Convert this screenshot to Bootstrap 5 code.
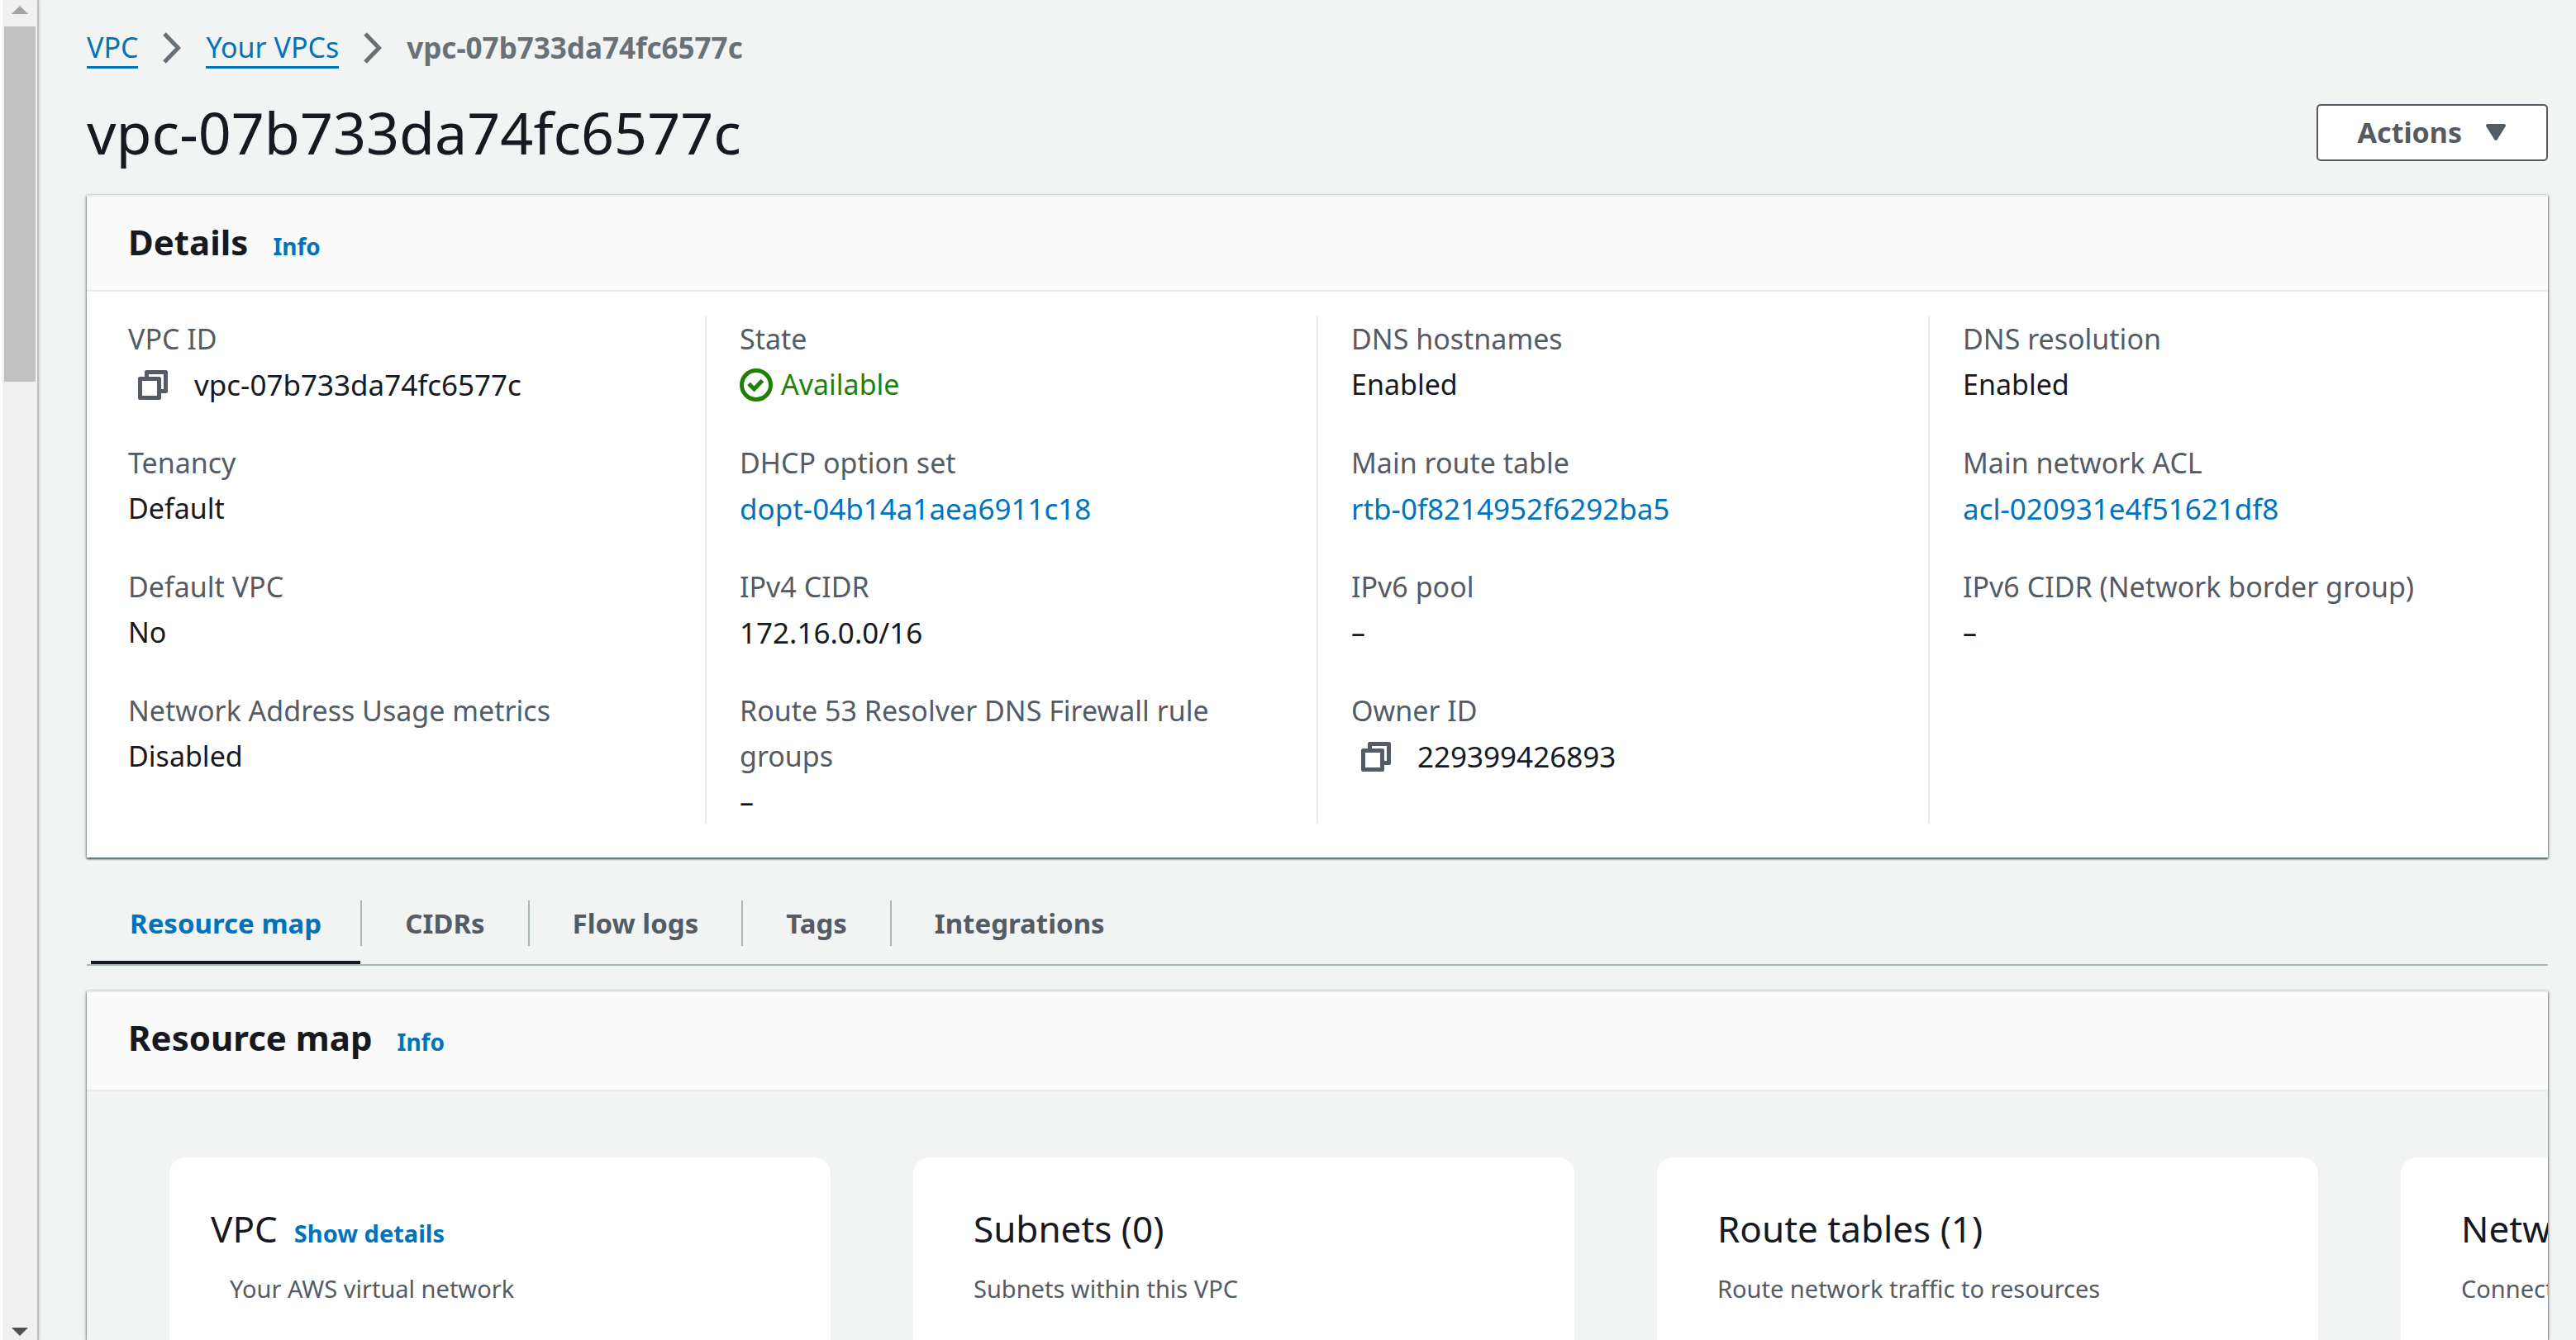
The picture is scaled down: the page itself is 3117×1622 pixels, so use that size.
<!DOCTYPE html>
<html lang="en">
<head>
<meta charset="utf-8">
<meta name="viewport" content="width=device-width, initial-scale=1">
<title>vpc-07b733da74fc6577c | VPC Console</title>
<link href="https://cdn.jsdelivr.net/npm/bootstrap@5.3.0/dist/css/bootstrap.min.css" rel="stylesheet">
<style>
  :root { --ink:#16191f; --slate:#545b64; --azure:#0073bb; --canvas:#f2f3f3; --rule:#eaeded; --line:#aab7b8; }
  body { font-family:"Noto Sans","Open Sans",sans-serif; font-size:34px; line-height:55px; color:var(--ink); background:var(--canvas); }
  a { color:var(--azure); text-decoration:none; }
  .rail { width:45px; background:#f0f0f0; border-left:3px solid #fff; flex:none; box-shadow:1px 0 0 1px #b9c0c1, 3px 0 3px rgba(0,28,36,.15); }
  .rail-thumb { width:38px; height:430px; background:#c1c1c1; }
  .page-main { min-width:0; padding:30px 34px 0 60px; }
  .breadcrumb { --bs-breadcrumb-margin-bottom:0; }
  .breadcrumb a { border-bottom:3px solid var(--azure); line-height:46px; display:inline-block; }
  .crumb-here { color:#687078; font-weight:700; }
  .crumb-here, .id-text { font-size:35px; }
  .title-row { margin:30px 0 31px; }
  .page-title { font-size:70px; line-height:90px; font-weight:400; }
  .btn-actions { --bs-btn-color:var(--slate); --bs-btn-bg:#fff; --bs-btn-border-color:var(--slate); --bs-btn-border-width:2px; --bs-btn-border-radius:5px; --bs-btn-font-size:34px; --bs-btn-font-weight:700; --bs-btn-line-height:55px; --bs-btn-padding-y:5px; --bs-btn-padding-x:48px; gap:28px; }
  .panel { box-shadow:0 2px 2px 0 rgba(0,28,36,.5), 1px 1px 3px 0 rgba(0,28,36,.35), -1px 1px 3px 0 rgba(0,28,36,.3); border-top:2px solid var(--rule); background:#fff; }
  .panel-head { background:#fafafa; border-bottom:2px solid var(--rule); padding:27px 50px 31px; gap:30px; }
  .panel-head.tall { padding-bottom:36px; }
  .panel-head h2 { font-size:42px; font-weight:700; line-height:55px; margin:0; }
  .info-link { font-size:28px; font-weight:700; line-height:28px; }
  .map-head .info-link { font-size:29px; }
  .facts { padding:30px 10px 40px; }
  .fact-col { flex:1 1 0; padding:0 40px; display:flex; flex-direction:column; gap:40px; }
  .fact-col + .fact-col { border-left:2px solid var(--rule); }
  .fact-col dt { font-weight:400; color:var(--slate); }
  .fact-col dd { margin:0; }
  .copy-btn { border:0; background:none; padding:0 32px 0 12px; color:var(--slate); line-height:0; }
  .ok-text { color:#1d8102; gap:10px; }
  .nav-tabs { --bs-nav-tabs-border-width:0; border-bottom:2px solid var(--line); padding-left:5px; margin:52px 0 30px; }
  .nav-tabs .nav-item { padding-bottom:22px; }
  .nav-tabs .nav-link { color:var(--slate); font-size:33px; font-weight:700; padding:0 52px; border:0; border-radius:0; line-height:55px; }
  .nav-tabs .nav-item + .nav-item .nav-link { border-left:2px solid var(--line); }
  .nav-tabs .nav-item.current { border-bottom:4px solid var(--ink); padding-bottom:18px; }
  .nav-tabs .nav-item.current .nav-link { color:var(--azure); padding:0 47px; }
  .map-area { background:var(--canvas); padding:80px 0 0 100px; gap:100px; overflow:hidden; }
  .map-card { flex:0 0 800px; border-radius:20px 20px 0 0; background:#fff; padding:59px 50px 0 73px; }
  .map-head { gap:20px; }
  .map-head.outdent { margin-left:-23px; }
  .map-head h3 { font-size:44px; font-weight:400; line-height:55px; margin:0; }
  .map-note { font-size:29px; line-height:40px; color:var(--slate); margin:25px 0 0; }
</style>
</head>
<body>
<div class="d-flex vh-100 overflow-hidden">
  <div class="rail d-flex flex-column align-items-center" aria-hidden="true">
    <svg width="20" height="32" viewBox="0 0 20 32"><path d="M0 17 10 7 20 17z" fill="#a3a3a3"/></svg>
    <div class="rail-thumb"></div>
    <svg class="mt-auto" width="20" height="22" viewBox="0 0 20 22"><path d="M0 7h20L10 17z" fill="#505050"/></svg>
  </div>
  <main class="page-main flex-grow-1 d-flex flex-column">
    <nav aria-label="breadcrumb">
      <ol class="breadcrumb align-items-center">
        <li><a href="#">VPC</a></li>
        <li class="d-flex"><svg width="82" height="40" viewBox="-1 0 82 40"><path d="M31 3 47.500 20 31 37" fill="none" stroke="#687078" stroke-width="5"/></svg></li>
        <li><a href="#">Your VPCs</a></li>
        <li class="d-flex"><svg width="82" height="40" viewBox="-1 0 82 40"><path d="M31 3 47.500 20 31 37" fill="none" stroke="#687078" stroke-width="5"/></svg></li>
        <li class="crumb-here" aria-current="page">vpc-07b733da74fc6577c</li>
      </ol>
    </nav>
    <div class="title-row d-flex justify-content-between align-items-center">
      <h1 class="page-title mb-0">vpc-07b733da74fc6577c</h1>
      <button class="btn btn-actions d-flex align-items-center" type="button">Actions <svg width="26" height="22" viewBox="0 0 26 22"><path d="M3 3h20L13 19z" fill="currentColor" stroke="currentColor" stroke-width="4" stroke-linejoin="round"/></svg></button>
    </div>
    <section class="panel">
      <header class="panel-head d-flex align-items-baseline"><h2>Details</h2><a class="info-link" href="#">Info</a></header>
      <div class="facts d-flex">
        <dl class="fact-col mb-0">
          <div><dt>VPC ID</dt><dd class="d-flex align-items-center"><button class="copy-btn" type="button" aria-label="Copy VPC ID"><svg width="36" height="36" viewBox="0 0 36 36" fill="none" stroke="currentColor" stroke-width="5" stroke-linejoin="round"><path d="M2.500 10.500h23v23h-23zM10.500 10V2.500h23v23H26"/></svg></button><span class="id-text">vpc-07b733da74fc6577c</span></dd></div>
          <div><dt>Tenancy</dt><dd>Default</dd></div>
          <div><dt>Default VPC</dt><dd>No</dd></div>
          <div><dt>Network Address Usage metrics</dt><dd>Disabled</dd></div>
        </dl>
        <dl class="fact-col mb-0">
          <div><dt>State</dt><dd class="ok-text d-flex align-items-center"><svg width="40" height="40" viewBox="0 0 40 40" fill="none" stroke="currentColor" stroke-width="5"><circle cx="20" cy="20" r="17.500"/><path d="M11 18.500l6.500 6.500 10-10.500"/></svg>Available</dd></div>
          <div><dt>DHCP option set</dt><dd class="id-text"><a href="#">dopt-04b14a1aea6911c18</a></dd></div>
          <div><dt>IPv4 CIDR</dt><dd class="id-text">172.16.0.0/16</dd></div>
          <div><dt>Route 53 Resolver DNS Firewall rule groups</dt><dd>–</dd></div>
        </dl>
        <dl class="fact-col mb-0">
          <div><dt>DNS hostnames</dt><dd>Enabled</dd></div>
          <div><dt>Main route table</dt><dd class="id-text"><a href="#">rtb-0f8214952f6292ba5</a></dd></div>
          <div><dt>IPv6 pool</dt><dd>–</dd></div>
          <div><dt>Owner ID</dt><dd class="d-flex align-items-center"><button class="copy-btn" type="button" aria-label="Copy owner ID"><svg width="36" height="36" viewBox="0 0 36 36" fill="none" stroke="currentColor" stroke-width="5" stroke-linejoin="round"><path d="M2.500 10.500h23v23h-23zM10.500 10V2.500h23v23H26"/></svg></button><span class="id-text">229399426893</span></dd></div>
        </dl>
        <dl class="fact-col mb-0">
          <div><dt>DNS resolution</dt><dd>Enabled</dd></div>
          <div><dt>Main network ACL</dt><dd class="id-text"><a href="#">acl-020931e4f51621df8</a></dd></div>
          <div><dt>IPv6 CIDR (Network border group)</dt><dd>–</dd></div>
        </dl>
      </div>
    </section>
    <ul class="nav nav-tabs">
      <li class="nav-item current"><a class="nav-link" href="#" aria-current="page">Resource map</a></li>
      <li class="nav-item"><a class="nav-link" href="#">CIDRs</a></li>
      <li class="nav-item"><a class="nav-link" href="#">Flow logs</a></li>
      <li class="nav-item"><a class="nav-link" href="#">Tags</a></li>
      <li class="nav-item"><a class="nav-link" href="#">Integrations</a></li>
    </ul>
    <section class="panel flex-grow-1 d-flex flex-column">
      <header class="panel-head tall d-flex align-items-baseline"><h2>Resource map</h2><a class="info-link" href="#">Info</a></header>
      <div class="map-area d-flex flex-grow-1">
        <article class="map-card"><div class="map-head outdent d-flex align-items-baseline"><h3>VPC</h3><a class="info-link" href="#">Show details</a></div><p class="map-note">Your AWS virtual network</p></article>
        <article class="map-card"><div class="map-head"><h3>Subnets (0)</h3></div><p class="map-note">Subnets within this VPC</p></article>
        <article class="map-card"><div class="map-head"><h3>Route tables (1)</h3></div><p class="map-note">Route network traffic to resources</p></article>
        <article class="map-card"><div class="map-head"><h3>Network connections (0)</h3></div><p class="map-note">Connections to other networks</p></article>
      </div>
    </section>
  </main>
</div>
<script src="https://cdn.jsdelivr.net/npm/bootstrap@5.3.0/dist/js/bootstrap.bundle.min.js"></script>
</body>
</html>
